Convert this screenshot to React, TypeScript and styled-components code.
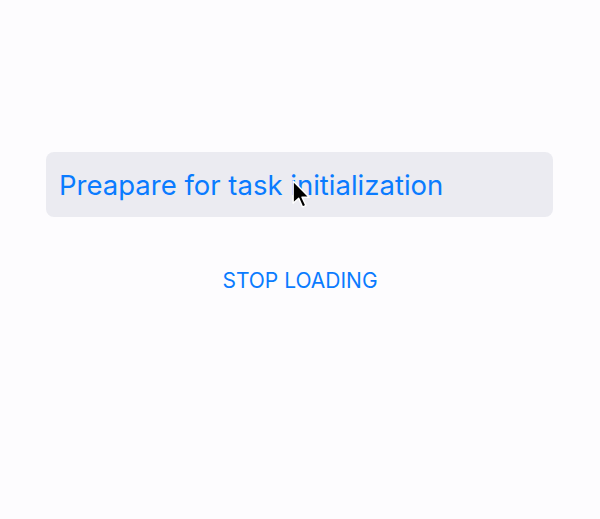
import styled, { createGlobalStyle } from 'styled-components';

const GlobalStyle = createGlobalStyle`
    html, body {
        margin: 0;
        padding: 0;
        background: #fdfcfe;
    }
    body {
        font-family: Inter, Roboto, "Liberation Sans", sans-serif;
    }
`;

const Page = styled.div`
    width: 600px;
    height: 519px;
    display: flex;
    flex-direction: column;
    align-items: center;
    padding-top: 152px;
    box-sizing: border-box;
`;

const Field = styled.div`
    position: relative;
    width: 507px;
    height: 65px;
    margin-left: -1px;
    box-sizing: border-box;
    padding: 2px 0 0 13px;
    display: flex;
    align-items: center;
    background-color: #ebebf1;
    border-radius: 8px;
`;

const FieldText = styled.span`
    font-size: 27.5px;
    color: #0a7bff;
    line-height: 1;
`;

const Cursor = styled.svg`
    position: absolute;
    left: 246px;
    top: 28px;
    width: 20px;
    height: 31px;
`;

const StopButton = styled.button`
    margin-top: 51px;
    border: 0;
    background: none;
    padding: 0;
    font-family: inherit;
    font-size: 21px;
    color: #0a7bff;
    cursor: pointer;
`;

function App() {
    return (
        <>
            <GlobalStyle />
            <Page>
                <Field>
                    <FieldText>Preapare for task initialization</FieldText>
                    <Cursor viewBox="0 0 18 28">
                        <path d="M1 1 L1 21 L6 16.5 L9.5 24.5 L12.5 23 L9 15.5 L15.5 15.5 Z" fill="#000" stroke="#fff" strokeWidth="1.3" strokeLinejoin="round" />
                    </Cursor>
                </Field>
                <StopButton>STOP LOADING</StopButton>
            </Page>
        </>
    );
}

export default App;
